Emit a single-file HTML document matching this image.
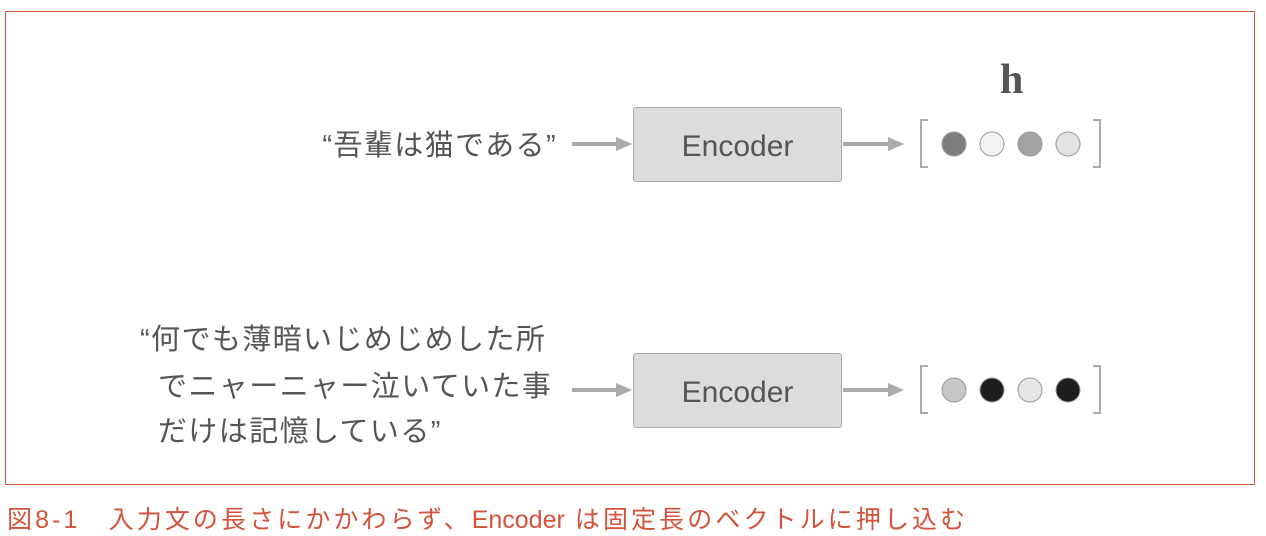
<!DOCTYPE html>
<html><head><meta charset="utf-8"><style>
body{margin:0;width:1266px;height:534px;background:#fff;position:relative;overflow:hidden;font-family:"Liberation Sans","Noto Sans CJK JP",sans-serif}
.frame{position:absolute;left:5px;top:11px;width:1248px;height:472px;border:1px solid #d4523a}
.t{position:absolute;color:#555;font-size:29px;white-space:nowrap;line-height:1;letter-spacing:1.4px}
.box{position:absolute;left:633px;width:209px;height:75px;background:#dcdcde;border:1.5px solid #aaa;border-radius:3px;box-sizing:border-box;color:#555;font-size:30px;display:flex;align-items:center;justify-content:center;padding-top:4px}
.cap{position:absolute;left:7px;top:500px;color:#d4523a;font-size:25px;white-space:nowrap;letter-spacing:3.1px}
.cap span{letter-spacing:0;font-size:25px}
</style></head><body>
<div class="frame"></div>
<div class="t" style="right:709px;top:132px">“吾輩は猫である”</div>
<div class="t" style="left:140px;top:326px">“何でも薄暗いじめじめした所</div>
<div class="t" style="left:158px;top:373px">でニャーニャー泣いていた事</div>
<div class="t" style="left:158px;top:418px">だけは記憶している”</div>
<div class="box" style="top:107px">Encoder</div>
<div class="box" style="top:353px">Encoder</div>
<div style="position:absolute;left:1000px;top:56px;font-family:'Liberation Serif',serif;font-weight:bold;font-size:42px;color:#555">h</div>
<svg width="1266" height="534" style="position:absolute;left:0;top:0">
<g stroke="#aaa" stroke-width="4" fill="#aaa">
<line x1="572" y1="144" x2="618" y2="144"/><polygon points="616,137 632,144 616,151" stroke="none"/>
<line x1="843" y1="144" x2="890" y2="144"/><polygon points="888,137 904,144 888,151" stroke="none"/>
<line x1="572" y1="390" x2="618" y2="390"/><polygon points="616,383 632,390 616,397" stroke="none"/>
<line x1="843" y1="390" x2="890" y2="390"/><polygon points="888,383 904,390 888,397" stroke="none"/>
</g>
<g stroke="#aaa" stroke-width="2" fill="none">
<path d="M928 120H921V167H928"/><path d="M1093 120H1100V167H1093"/>
<path d="M928 366H921V413H928"/><path d="M1093 366H1100V413H1093"/>
</g>
<g stroke="#999" stroke-width="1">
<circle cx="954" cy="144" r="12" fill="#7d7d80"/>
<circle cx="992" cy="144" r="12" fill="#f3f3f3"/>
<circle cx="1030" cy="144" r="12" fill="#a3a3a5"/>
<circle cx="1068" cy="144" r="12" fill="#e2e2e4"/>
<circle cx="954" cy="390" r="12" fill="#c6c6c8"/>
<circle cx="992" cy="390" r="12" fill="#1e1e1e"/>
<circle cx="1030" cy="390" r="12" fill="#e5e5e7"/>
<circle cx="1068" cy="390" r="12" fill="#1e1e1e"/>
</g>
</svg>
<div class="cap">図8-1　入力文の長さにかかわらず、<span>Encoder</span> は固定長のベクトルに押し込む</div>
</body></html>
